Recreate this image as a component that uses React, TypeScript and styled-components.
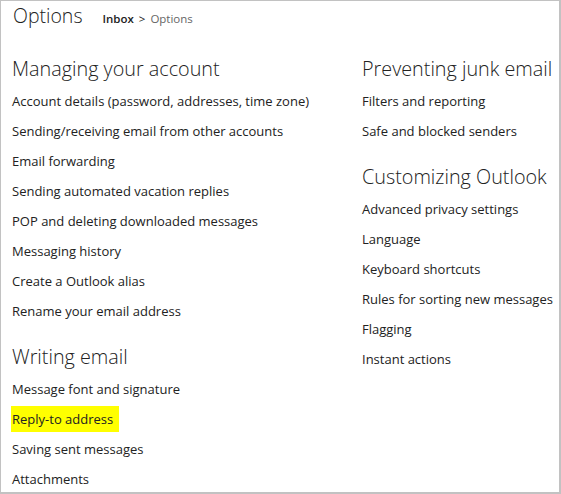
import React from 'react';
import styled, { createGlobalStyle } from 'styled-components';

const GlobalStyle = createGlobalStyle`
  html, body {
    margin: 0;
    padding: 0;
    background: #fff;
  }

  body {
    font-family: 'Open Sans', 'Noto Sans', sans-serif;
    color: #222;
  }
`;

const Frame = styled.div`
  box-sizing: border-box;
  width: 561px;
  height: 494px;
  border: 1px solid #c2c2c2;
  border-right-width: 2px;
  border-bottom-width: 2px;
  padding: 0 0 0 11px;
  overflow: hidden;
`;

const Header = styled.header`
  display: flex;
  align-items: baseline;
  height: 37px;
`;

const Title = styled.h1`
  margin: 1px 0 0 1px;
  font-size: 19.5px;
  font-weight: 300;
  line-height: 28px;
  color: #222;
`;

const Crumbs = styled.nav`
  margin-left: 20px;
  font-size: 11.5px;
  color: #666;

  strong {
    font-weight: 600;
    color: #222;
  }

  span {
    margin: 0 5px;
    color: #222;
  }
`;

const Columns = styled.div`
  display: grid;
  grid-template-columns: 350px 1fr;
  padding-top: 17px;
`;

const Column = styled.div`
  display: flex;
  flex-direction: column;
`;

const Group = styled.section`
  & + & {
    margin-top: 17px;
  }
`;

const Heading = styled.h2`
  margin: 0 0 4px;
  font-size: 19.8px;
  font-weight: 300;
  line-height: 27px;
  color: #222;
  white-space: nowrap;
`;

const List = styled.ul`
  margin: 0;
  padding: 0;
  list-style: none;
`;

const Item = styled.li<{ marked?: boolean }>`
  height: 30px;
  line-height: 30px;
  font-size: 13px;
  white-space: nowrap;

  a {
    color: #222;
    text-decoration: none;
    margin-left: ${(p) => (p.marked ? '-1px' : '0')};
    padding: ${(p) => (p.marked ? '4px 6px 4px 1px' : '0')};
    background: ${(p) => (p.marked ? '#ffff00' : 'transparent')};
  }
`;

interface Section {
  title: string;
  links: string[];
}

const left: Section[] = [
  {
    title: 'Managing your account',
    links: [
      'Account details (password, addresses, time zone)',
      'Sending/receiving email from other accounts',
      'Email forwarding',
      'Sending automated vacation replies',
      'POP and deleting downloaded messages',
      'Messaging history',
      'Create a Outlook alias',
      'Rename your email address',
    ],
  },
  {
    title: 'Writing email',
    links: ['Message font and signature', 'Reply-to address', 'Saving sent messages', 'Attachments'],
  },
];

const right: Section[] = [
  {
    title: 'Preventing junk email',
    links: ['Filters and reporting', 'Safe and blocked senders'],
  },
  {
    title: 'Customizing Outlook',
    links: [
      'Advanced privacy settings',
      'Language',
      'Keyboard shortcuts',
      'Rules for sorting new messages',
      'Flagging',
      'Instant actions',
    ],
  },
];

const renderColumn = (sections: Section[]) => (
  <Column>
    {sections.map((section) => (
      <Group key={section.title}>
        <Heading>{section.title}</Heading>
        <List>
          {section.links.map((link) => (
            <Item key={link} marked={link === 'Reply-to address'}>
              <a href="#">{link}</a>
            </Item>
          ))}
        </List>
      </Group>
    ))}
  </Column>
);

const App: React.FC = () => (
  <>
    <GlobalStyle />
    <Frame>
      <Header>
        <Title>Options</Title>
        <Crumbs>
          <strong>Inbox</strong>
          <span>&gt;</span>
          Options
        </Crumbs>
      </Header>
      <Columns>
        {renderColumn(left)}
        {renderColumn(right)}
      </Columns>
    </Frame>
  </>
);

export default App;
